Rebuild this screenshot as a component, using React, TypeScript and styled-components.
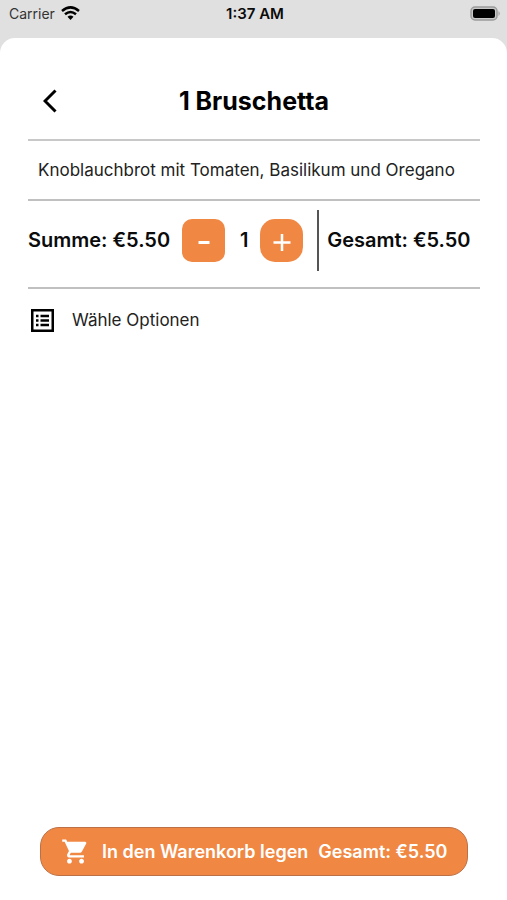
import React, { useState } from "react";
import styled, { createGlobalStyle } from "styled-components";
import { MdShoppingCart } from "react-icons/md";

const GlobalStyle = createGlobalStyle`
  * { box-sizing: border-box; }
  body {
    margin: 0;
    background: #e0e0e0;
    color: #0b0b0b;
    font-family: Inter, "Liberation Sans", sans-serif;
  }
  button { font-family: inherit; cursor: pointer; }
  svg { flex-shrink: 0; }
`;

const Screen = styled.div`
  min-height: 100vh;
  display: flex;
  flex-direction: column;
`;

const StatusBar = styled.header`
  height: 38px;
  padding: 0 6px 12px 9px;
  display: grid;
  grid-template-columns: 1fr auto 1fr;
  align-items: center;
  font-size: 14px;
`;

const Carrier = styled.div`
  display: flex;
  align-items: center;
  gap: 6px;
  color: #333;
`;

const Clock = styled.time`
  font-size: 15px;
  font-weight: 600;
`;

const Battery = styled.div`
  display: flex;
  justify-content: flex-end;
`;

const Sheet = styled.main`
  flex: 1;
  display: flex;
  flex-direction: column;
  padding: 24px 27px 24px 28px;
  background: #fff;
  border-radius: 15px 15px 0 0;
`;

const TitleBar = styled.div`
  height: 79px;
  display: grid;
  grid-template-columns: 44px 1fr 44px;
  align-items: center;
  border-bottom: 2px solid #c8c8c8;
`;

const BackButton = styled.button`
  height: 44px;
  padding: 0;
  display: grid;
  place-items: center;
  border: 0;
  background: none;
  color: #000;
`;

const Title = styled.h1`
  margin: 0;
  text-align: center;
  font-size: 25px;
  font-weight: 700;
  color: #000;
`;

const Description = styled.p`
  margin: 0;
  height: 60px;
  padding: 0 10px;
  display: flex;
  align-items: center;
  border-bottom: 2px solid #c0c0c0;
  font-size: 17px;
  color: #222;
`;

const PriceRow = styled.section`
  height: 88px;
  padding-bottom: 8px;
  display: flex;
  align-items: center;
  border-bottom: 2px solid #c0c0c0;
  font-size: 20px;
  font-weight: 600;
  white-space: nowrap;
`;

const Stepper = styled.div`
  margin-left: 12px;
  display: flex;
  align-items: center;
`;

const StepButton = styled.button<{ $radius: number }>`
  width: 43px;
  height: 43px;
  padding: 0;
  border: 0;
  border-radius: ${({ $radius }) => $radius}px;
  display: grid;
  place-items: center;
  background: #f08844;
  color: #fff;
`;

const Quantity = styled.output`
  width: 35px;
  padding-left: 3px;
  text-align: center;
`;

const Total = styled.div`
  height: 61px;
  margin-left: 14px;
  padding-left: 8px;
  display: flex;
  align-items: center;
  border-left: 2px solid #555;
`;

const Options = styled.button`
  height: 62px;
  padding: 0 3px;
  display: flex;
  align-items: center;
  gap: 18px;
  border: 0;
  background: none;
  color: #222;
  font-size: 17px;
`;

const CartButton = styled.button`
  height: 49px;
  margin: auto 12px 0;
  padding: 0 18px 0 20px;
  display: flex;
  align-items: center;
  border: 1px solid #bd7045;
  border-radius: 19px;
  background: #f08844;
  color: #fff;
  font-size: 18px;
  font-weight: 600;
  white-space: nowrap;
`;

const CartLabel = styled.span`
  margin: 0 10px 0 12px;
`;

const euro = (value: number) => `€${value.toFixed(2)}`;

const WifiIcon = () => (
  <svg width="19" height="14" viewBox="0 0 19 14" aria-hidden="true">
    <g fill="none" stroke="#000" strokeWidth="2.5">
      <path d="M1 5Q9.500-2.200 18 5" />
      <path d="M4 8.300Q9.500 3.600 15 8.300" />
    </g>
    <path d="M6.500 10.700Q9.500 8.200 12.500 10.700L9.500 13.900Z" />
  </svg>
);

const BatteryIcon = () => (
  <svg width="31" height="15" viewBox="0 0 31 15" aria-hidden="true">
    <rect x="1" y="1" width="26" height="13" rx="4" fill="#c8c8c8" stroke="#9b9b9b" strokeWidth="1.500" />
    <rect x="3" y="3" width="22" height="9" rx="2" />
    <path d="M28.500 5Q31 7.500 28.500 10Z" fill="#9b9b9b" />
  </svg>
);

const BackIcon = () => (
  <svg width="14" height="24" viewBox="0 0 14 24" aria-hidden="true">
    <path d="M12.500 1.500L2 12L12.500 22.500" fill="none" stroke="currentColor" strokeWidth="3" />
  </svg>
);

const ListIcon = () => (
  <svg width="23" height="23" viewBox="0 0 23 23" aria-hidden="true">
    <path
      d="M1.250 1.250H21.750V21.750H1.250ZM5 7H7.500M9.500 7H18M5 11.500H7.500M9.500 11.500H18M5 16H7.500M9.500 16H18"
      fill="none"
      stroke="#000"
      strokeWidth="2.500"
    />
  </svg>
);

const MinusIcon = () => (
  <svg width="12" height="8" viewBox="0 0 12 8" aria-hidden="true">
    <path d="M0.500 6.500H11.500" stroke="currentColor" strokeWidth="3" />
  </svg>
);

const PlusIcon = () => (
  <svg width="18" height="22" viewBox="0 0 18 22" aria-hidden="true">
    <path d="M0.500 13.500H17.500M9 5V22" stroke="currentColor" strokeWidth="2.500" />
  </svg>
);

export default function App() {
  const price = 5.5;
  const [count, setCount] = useState(1);
  const total = euro(price * count);

  return (
    <>
      <GlobalStyle />
      <Screen>
        <StatusBar>
          <Carrier>
            Carrier <WifiIcon />
          </Carrier>
          <Clock>1:37 AM</Clock>
          <Battery>
            <BatteryIcon />
          </Battery>
        </StatusBar>
        <Sheet>
          <TitleBar>
            <BackButton type="button" aria-label="Zurück">
              <BackIcon />
            </BackButton>
            <Title>1 Bruschetta</Title>
          </TitleBar>
          <Description>Knoblauchbrot mit Tomaten, Basilikum und Oregano</Description>
          <PriceRow>
            <span>Summe: {euro(price)}</span>
            <Stepper>
              <StepButton
                type="button"
                aria-label="Weniger"
                $radius={10}
                onClick={() => setCount((n) => Math.max(1, n - 1))}
              >
                <MinusIcon />
              </StepButton>
              <Quantity>{count}</Quantity>
              <StepButton
                type="button"
                aria-label="Mehr"
                $radius={15}
                onClick={() => setCount((n) => n + 1)}
              >
                <PlusIcon />
              </StepButton>
            </Stepper>
            <Total>Gesamt: {total}</Total>
          </PriceRow>
          <Options type="button">
            <ListIcon />
            Wähle Optionen
          </Options>
          <CartButton type="button">
            <MdShoppingCart size={29} />
            <CartLabel>In den Warenkorb legen</CartLabel>
            <span>Gesamt: {total}</span>
          </CartButton>
        </Sheet>
      </Screen>
    </>
  );
}
